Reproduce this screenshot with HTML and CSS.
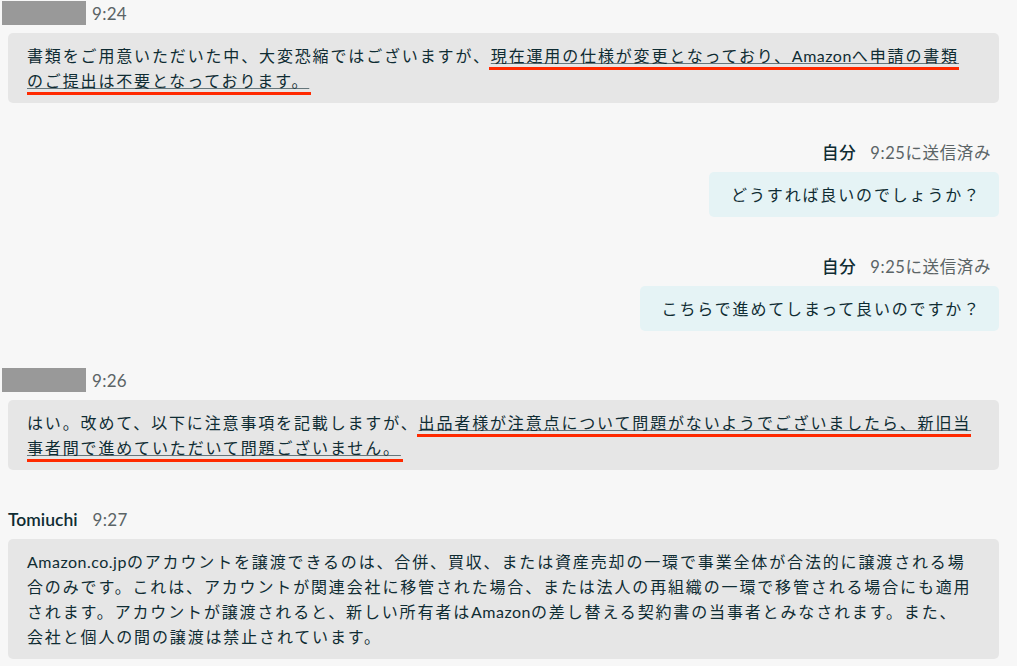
FILE: index.html
```html
<!DOCTYPE html>
<html lang="ja">
<head>
<meta charset="utf-8">
<title>Chat</title>
<link rel="stylesheet" href="styles.css">
</head>
<body>
<div class="chat">
  <div class="msg">
    <div class="head"><span class="redact"></span><span class="time">9:24</span></div>
    <div class="bubble in"><p>書類をご用意いただいた中、大変恐縮ではございますが、<span class="mark">現在運用の仕様が変更となっており、<span class="lat">Amazon</span>へ申請の書類<br>のご提出は不要となっております。</span></p></div>
  </div>
  <div class="msg out">
    <div class="head"><span class="me">自分</span><span class="sent">9:25に送信済み</span></div>
    <div class="bubble mine"><p>どうすれば良いのでしょうか？</p></div>
  </div>
  <div class="msg out">
    <div class="head"><span class="me">自分</span><span class="sent">9:25に送信済み</span></div>
    <div class="bubble mine"><p>こちらで進めてしまって良いのですか？</p></div>
  </div>
  <div class="msg">
    <div class="head"><span class="redact"></span><span class="time">9:26</span></div>
    <div class="bubble in"><p>はい。改めて、以下に注意事項を記載しますが、<span class="mark">出品者様が注意点について問題がないようでございましたら、新旧当<br>事者間で進めていただいて問題ございません。</span></p></div>
  </div>
  <div class="msg">
    <div class="head"><span class="name">Tomiuchi</span><span class="time">9:27</span></div>
    <div class="bubble in"><p><span class="lat">Amazon.co.jp</span>のアカウントを譲渡できるのは、合併、買収、または資産売却の一環で事業全体が合法的に譲渡される場<br>合のみです。これは、アカウントが関連会社に移管された場合、または法人の再組織の一環で移管される場合にも適用<br>されます。アカウントが譲渡されると、新しい所有者は<span class="lat">Amazon</span>の差し替える契約書の当事者とみなされます。また、<br>会社と個人の間の譲渡は禁止されています。</p></div>
  </div>
</div>
</body>
</html>
```

FILE: styles.css
```css
html, body {
  margin: 0;
  padding: 0;
  background: #f7f7f7;
}
body {
  font-family: Lato, "Noto Sans CJK JP", sans-serif;
  color: #0f2c33;
  width: 1017px;
  height: 666px;
  overflow: hidden;
}
.chat {
  display: flex;
  flex-direction: column;
  gap: 37px;
  padding: 1px 18px 0 8px;
}
.msg {
  display: flex;
  flex-direction: column;
  gap: 8px;
}
.msg.out {
  align-items: flex-end;
}
.head {
  display: flex;
  align-items: center;
  height: 24px;
  font-size: 16px;
}
.msg.out .head {
  padding-right: 8px;
  gap: 14px;
  font-size: 16.5px;
  letter-spacing: 0.6px;
}
.redact {
  display: block;
  width: 84px;
  height: 24px;
  margin-left: -6px;
  background: #999999;
  margin-right: 6px;
}
.time {
  color: #5b6466;
  font-size: 17px;
  letter-spacing: 0.3px;
}
.name {
  font-size: 17.5px;
  font-weight: 600;
  color: #0f2c33;
  margin-right: 15px;
}
.me {
  font-weight: 500;
  color: #0f2c33;
}
.sent {
  color: #5b6466;
}
.bubble {
  border-radius: 5px;
  padding: 10px 19px;
  background: #e6e6e6;
}
.bubble.mine {
  background: #e5f3f5;
  padding: 10px 18px 10px 22px;
}
.bubble p {
  margin: 0;
  font-size: 16px;
  line-height: 25px;
  letter-spacing: 1.85px;
  white-space: nowrap;
}
.lat {
  letter-spacing: 0.5px;
}
.mark {
  text-decoration: underline;
  text-decoration-thickness: 1px;
  text-underline-offset: 1px;
  text-decoration-color: rgba(15, 44, 51, 0.6);
  border-bottom: 3px solid #ff2a00;
  padding: 0 2px 2px;
  margin: 0 -2px;
}
```
